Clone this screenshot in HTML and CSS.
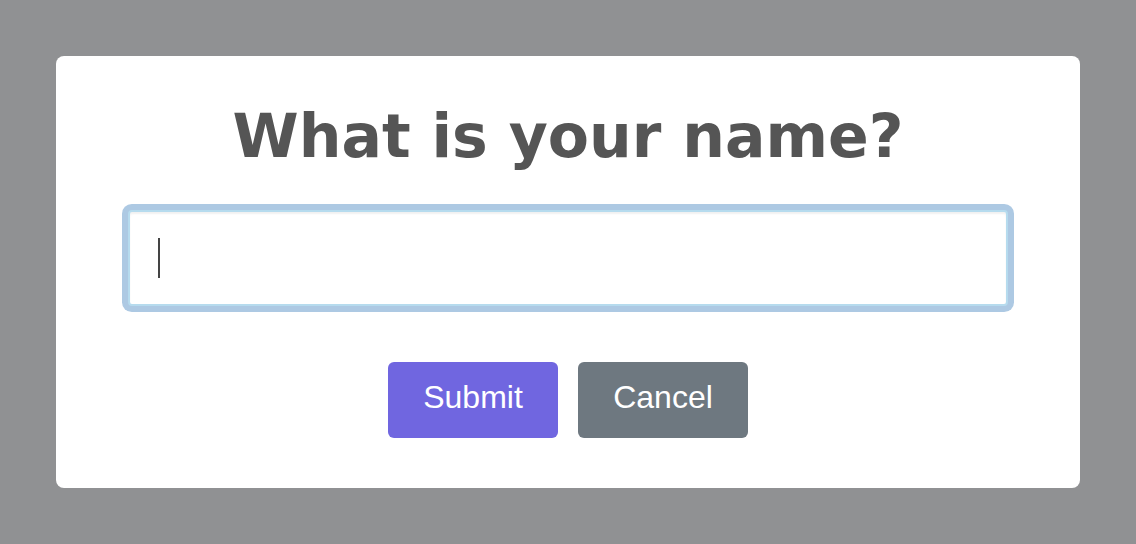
FILE: index.html
```html
<!DOCTYPE html>
<html lang="en">
<head>
  <meta charset="utf-8" />
  <title>Prompt</title>
  <link rel="stylesheet" href="styles.css">
</head>
<body>
  <div class="dialog">
    <h1 class="dialog-title">What is your name?</h1>
    <div class="input-wrap">
      <input type="text" class="name-input" autofocus>
      <span class="caret"></span>
    </div>
    <div class="dialog-actions">
      <button type="button" class="btn btn-submit">Submit</button>
      <button type="button" class="btn btn-cancel">Cancel</button>
    </div>
  </div>
</body>
</html>
```

FILE: styles.css
```css
body {
  margin: 0;
  min-height: 100vh;
  background: #909193;
  display: flex;
  align-items: center;
  justify-content: center;
  font-family: "Liberation Sans", Arial, sans-serif;
}
.dialog {
  width: 1024px;
  box-sizing: border-box;
  background: white;
  border-radius: 8px;
  padding: 44px 72px 50px;
  display: flex;
  flex-direction: column;
  align-items: center;
}
.dialog-title {
  margin: 0;
  font-family: "DejaVu Sans", sans-serif;
  font-weight: bold;
  font-size: 60px;
  line-height: 72px;
  color: #555555;
}
.input-wrap {
  position: relative;
  margin-top: 38px;
}
.name-input {
  display: block;
  width: 880px;
  height: 96px;
  box-sizing: border-box;
  border: 2px solid #b6dbee;
  border-radius: 4px;
  box-shadow: 0 0 0 6px #adc9e3, inset 0 2px 2px rgba(0, 0, 0, 0.06);
  outline: none;
  padding: 0 28px;
  font-family: "Liberation Sans", Arial, sans-serif;
  font-size: 34px;
  color: #444444;
  caret-color: transparent;
}
.caret {
  position: absolute;
  left: 30px;
  top: 28px;
  width: 2px;
  height: 40px;
  background: #444444;
}
.dialog-actions {
  margin-top: 56px;
  display: flex;
  gap: 20px;
}
.btn {
  width: 170px;
  height: 76px;
  border: none;
  border-radius: 6px;
  color: white;
  font-family: "Liberation Sans", Arial, sans-serif;
  font-size: 32px;
  padding: 0 0 5px;
}
.btn-submit {
  background: #7066e0;
}
.btn-cancel {
  background: #6e7880;
}
```
